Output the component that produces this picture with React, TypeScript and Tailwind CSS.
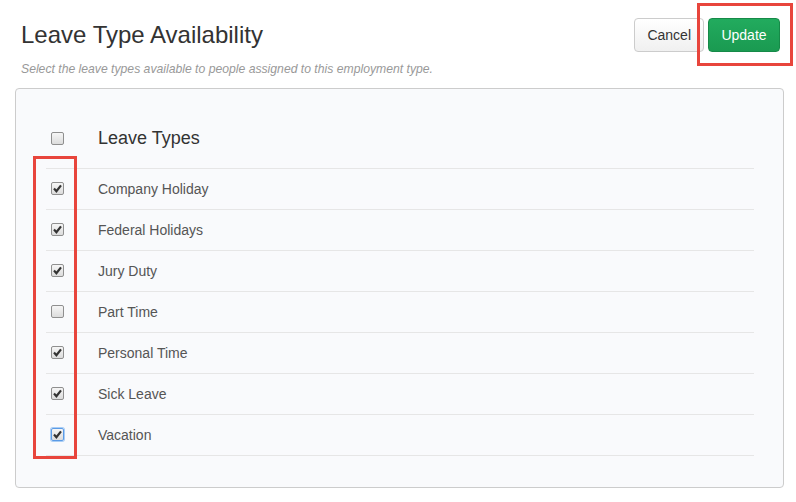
import React from 'react';

const leaveTypes = [
  { name: 'Company Holiday', checked: true },
  { name: 'Federal Holidays', checked: true },
  { name: 'Jury Duty', checked: true },
  { name: 'Part Time', checked: false },
  { name: 'Personal Time', checked: true },
  { name: 'Sick Leave', checked: true },
  { name: 'Vacation', checked: true, focused: true },
];

const Checkbox = ({ checked, focused }: { checked: boolean; focused?: boolean }) => (
  <span
    className={
      'flex h-[13px] w-[13px] items-center justify-center rounded-[2px] border bg-gradient-to-b from-[#f6f6f6] to-[#dcdcdc] ' +
      (focused ? 'border-[#5b9be6] shadow-[0_0_0_1px_#a9cdf5]' : 'border-[#8f8f8f]')
    }
  >
    {checked && (
      <svg width="9" height="9" viewBox="0 0 9 9">
        <path d="M1 4.6 L3.4 7.2 L8 1.4" fill="none" stroke="#333" strokeWidth="2.2" />
      </svg>
    )}
  </span>
);

export default function App() {
  return (
    <div className="relative min-h-[502px] w-[796px] bg-white pt-[18px] pl-[15px] pr-[12px] font-['Liberation_Sans',Arial,sans-serif]">
      <div className="flex items-start justify-between">
        <div className="pt-[4px] pl-[6px]">
          <h1 className="text-[24px] leading-[26px] text-[#333]">Leave Type Availability</h1>
          <p className="mt-[13px] text-[12.2px] italic leading-[17px] text-[#999]">
            Select the leave types available to people assigned to this employment type.
          </p>
        </div>
        <div className="mr-[4px] flex gap-[4px]">
          <button className="h-[34px] rounded-[4px] border border-[#ccc] bg-gradient-to-b from-white to-[#f0f0f0] px-[12px] text-[14px] text-[#333]">
            Cancel
          </button>
          <button className="h-[34px] w-[72px] rounded-[4px] border border-[#168a48] bg-gradient-to-b from-[#22ab5e] to-[#1a9a51] text-[14px] text-white">
            Update
          </button>
        </div>
      </div>

      <div className="mt-[10px] rounded-[4px] border border-[#ccc] bg-[#f9fafc] pt-[19px] pr-[29px] pb-[31px] pl-[30px]">
        <div className="flex h-[60px] items-center">
          <div className="w-[52px] pl-[5px]">
            <Checkbox checked={false} />
          </div>
          <span className="text-[18px] text-[#333]">Leave Types</span>
        </div>
        <div className="border-b border-[#e6e6e6]">
          {leaveTypes.map((t) => (
            <div key={t.name} className="flex h-[41px] items-center border-t border-[#e6e6e6]">
              <div className="w-[52px] pl-[5px] pb-[2px]">
                <Checkbox checked={t.checked} focused={t.focused} />
              </div>
              <span className="text-[14px] text-[#555]">{t.name}</span>
            </div>
          ))}
        </div>
      </div>

      {/* annotation boxes */}
      <div className="pointer-events-none absolute left-[697px] top-[3px] h-[63px] w-[96px] border-[3px] border-[#e8453c]" />
      <div className="pointer-events-none absolute left-[33px] top-[156px] h-[303px] w-[44px] border-[3px] border-[#e8453c]" />
    </div>
  );
}
